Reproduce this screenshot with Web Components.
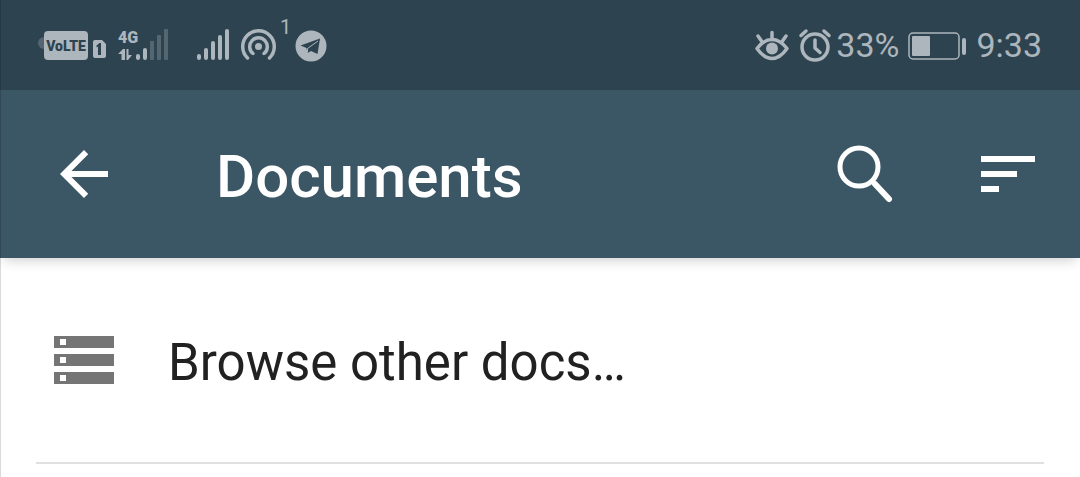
<!DOCTYPE html>
<html lang="en">
<head>
<meta charset="utf-8">
<meta name="viewport" content="width=device-width, initial-scale=1">
<title>Documents</title>
<style>
    body {
        margin: 0;
        background: #fff;
        font-family: Roboto, "Noto Sans", sans-serif;
    }
</style>
</head>
<body>
<doc-screen>
    <status-bar slot="status" battery="33%" time="9:33"></status-bar>
    <app-bar slot="bar">Documents</app-bar>
    <doc-row>Browse other docs…</doc-row>
</doc-screen>

<script>
class DocScreen extends HTMLElement {
    constructor() {
        super();
        this.attachShadow({mode: 'open'}).innerHTML = `
        <style>
            :host {
                display: flex;
                flex-direction: column;
                position: relative;
                min-height: 100vh;
            }
            /* thin edge line over the whole left side */
            :host::after {
                content: "";
                position: absolute;
                inset: 0 auto 0 0;
                width: 1px;
                background: rgba(0, 0, 0, .14);
                z-index: 2;
            }
            main { padding: 0 36px; }
        </style>
        <slot name="status"></slot>
        <slot name="bar"></slot>
        <main><slot></slot></main>
        `;
    }
}

class StatusBar extends HTMLElement {
    constructor() {
        super();
        var shadow = this.attachShadow({mode: 'open'});
        shadow.innerHTML = `
        <style>
            :host {
                display: flex;
                justify-content: space-between;
                align-items: center;
                height: 90px;
                padding: 0 38px;
                background: #2e4350;
                color: #acb6bc;
                font-size: 34px;
            }
            div { display: flex; align-items: center; }
            svg { display: block; flex: none; fill: currentColor; overflow: visible; }
            .line { fill: none; stroke: currentColor; stroke-linecap: round; }
            text { font-family: Roboto, sans-serif; font-weight: 900; }
            .signal { margin: 0 28px 0 12px; }
            .hotspot { margin: 0 4px 0 11px; }
            sup { align-self: flex-start; font-size: 20px; line-height: 20px; margin: 2px 4px 38px 0; }
            .alarm { margin: 0 5px 0 10px; }
            .battery { margin: 0 10px 0 9px; }
        </style>
        <div>
            <svg width="68" height="34" viewBox="0 0 68 34">
                <circle cx="6" cy="15" r="6" opacity=".3"/>
                <rect x="6" y="3" width="44" height="29" rx="4"/>
                <text x="28" y="23" font-size="14" text-anchor="middle" fill="#2e4350">VoLTE</text>
                <path d="M57 12h7l4 4v12a2 2 0 0 1-2 2H57a2 2 0 0 1-2-2V14a2 2 0 0 1 2-2z"/>
                <path d="M58.500 17.500l3-2.500h1.500v12h-3v-8.500l-1.500 1z" fill="#2e4350"/>
            </svg>
            <svg class="signal" width="51" height="34" viewBox="0 0 51 34">
                <text x="0" y="15" font-size="16">4G</text>
                <path d="M5 21h2v11H3.500v-6H0zM8.500 21h2v6h3.500l-4 5H8.500z"/>
                <rect x="18" y="26" width="4" height="6" rx="2"/>
                <rect x="25" y="20" width="4" height="12" rx="2"/>
                <g opacity=".3">
                    <rect x="32" y="13" width="4" height="19" rx="1"/>
                    <rect x="39" y="7" width="4" height="25" rx="1"/>
                    <rect x="46" y="1" width="4" height="31" rx="1"/>
                </g>
            </svg>
            <svg width="33" height="34" viewBox="0 0 33 34">
                <rect x="0" y="26" width="4" height="6" rx="2"/>
                <rect x="7" y="20" width="4" height="12" rx="2"/>
                <rect x="14" y="13" width="4" height="19" rx="2"/>
                <rect x="21" y="7" width="4" height="25" rx="2"/>
                <rect x="28" y="1" width="4" height="31" rx="2"/>
            </svg>
            <svg class="hotspot" width="35" height="34" viewBox="0 0 35 34">
                <circle cx="17.500" cy="18.500" r="3.500"/>
                <path class="line" stroke-width="3.500" d="M6.500 30a15.800 15.800 0 1 1 22 0M12 25.500a8.800 8.800 0 1 1 11 0"/>
            </svg>
            <sup>1</sup>
            <svg width="32" height="34" viewBox="0 0 32 34">
                <circle cx="16" cy="18" r="15.500"/>
                <path d="M25 10.500L22.500 26l-6.500-3-3.500 2-1-5L5.500 17.500z" fill="#2e4350"/>
                <path d="M23 13l-10.500 7.500v4" fill="none" stroke="#acb6bc"/>
            </svg>
        </div>
        <div>
            <svg width="34" height="34" viewBox="0 0 34 34">
                <path class="line" stroke-width="3.500" stroke-linejoin="round" d="M2 20.500Q9 11.500 17 11.500T32 20.500Q25 30.500 17 30.500T2 20.500zM17 10.500V4.500M6.500 13L3 8M27.500 13L31 8"/>
                <circle cx="17" cy="20.500" r="6"/>
            </svg>
            <svg class="alarm" width="32" height="34" viewBox="0 0 32 34">
                <path class="line" stroke-width="3.500" d="M2 7.500L7 3M30 7.500L25 3"/>
                <circle class="line" cx="16" cy="19" r="13" stroke-width="3.500"/>
                <path class="line" stroke-width="3.500" stroke-linejoin="round" d="M16 12v8l5 4.500"/>
            </svg>
            <span id="level"></span>
            <svg class="battery" width="58" height="34" viewBox="0 0 58 34">
                <rect class="line" x="1" y="5" width="50" height="26" rx="4" stroke-width="1.500"/>
                <rect x="4" y="8" width="18" height="20" rx="1"/>
                <rect x="54" y="10" width="4" height="17" rx="2"/>
            </svg>
            <time id="clock"></time>
        </div>
        `;
        shadow.getElementById('level').innerText = this.getAttribute('battery');
        shadow.getElementById('clock').innerText = this.getAttribute('time');
    }
}

class AppBar extends HTMLElement {
    constructor() {
        super();
        this.attachShadow({mode: 'open'}).innerHTML = `
        <style>
            :host {
                display: flex;
                align-items: center;
                height: 168px;
                padding: 0 36px 0 48px;
                box-sizing: border-box;
                background: #3b5664;
                color: #fff;
                box-shadow: 0 6px 12px -4px rgba(0, 0, 0, .2);
                z-index: 1;
            }
            h1 {
                flex: 1;
                margin: 0 0 0 96px;
                padding-top: 6px;
                font-size: 60px;
                line-height: 72px;
                font-weight: 500;
            }
        </style>
        <icon-button label="Back">
            <svg width="72" height="72" viewBox="0 0 24 24" fill="currentColor"><path d="M20 11H7.830l5.590-5.590L12 4l-8 8 8 8 1.410-1.410L7.830 13H20v-2z"/></svg>
        </icon-button>
        <h1><slot></slot></h1>
        <icon-button label="Search">
            <svg width="72" height="72" viewBox="0 0 72 72" fill="none" stroke="currentColor" stroke-linecap="round">
                <circle cx="31" cy="29" r="19" stroke-width="5"/>
                <path d="M47 46L61 61" stroke-width="6"/>
            </svg>
        </icon-button>
        <icon-button label="Sort" style="margin-left: 72px">
            <svg width="72" height="72" viewBox="0 0 24 24" fill="currentColor"><path d="M3 18h6v-2H3v2zM3 6v2h18V6H3zm0 7h12v-2H3v2z"/></svg>
        </icon-button>
        `;
    }
}

class IconButton extends HTMLElement {
    constructor() {
        super();
        var shadow = this.attachShadow({mode: 'open'});
        shadow.innerHTML = `
        <style>
            :host { display: block; flex: none; }
            button {
                display: block;
                padding: 0;
                border: 0;
                background: none;
                color: inherit;
                cursor: pointer;
            }
            ::slotted(svg) { display: block; }
        </style>
        <button><slot></slot></button>
        `;
        shadow.querySelector('button').setAttribute('aria-label', this.getAttribute('label'));
    }
}

class DocRow extends HTMLElement {
    constructor() {
        super();
        this.attachShadow({mode: 'open'}).innerHTML = `
        <style>
            :host { display: block; border-bottom: 2px solid #e0e0e0; }
            a {
                display: flex;
                align-items: center;
                gap: 48px;
                height: 204px;
                padding-left: 12px;
                color: #212121;
                text-decoration: none;
                font-size: 51px;
            }
            svg { flex: none; fill: #757575; }
            span { padding-top: 4px; }
        </style>
        <a href="#">
            <svg width="72" height="72" viewBox="0 0 24 24"><path d="M2 20h20v-4H2v4zm2-3h2v2H4v-2zM2 4v4h20V4H2zm4 3H4V5h2v2zm-4 7h20v-4H2v4zm2-3h2v2H4v-2z"/></svg>
            <span><slot></slot></span>
        </a>
        `;
    }
}

customElements.define('icon-button', IconButton);
customElements.define('doc-screen', DocScreen);
customElements.define('status-bar', StatusBar);
customElements.define('app-bar', AppBar);
customElements.define('doc-row', DocRow);
</script>
</body>
</html>
